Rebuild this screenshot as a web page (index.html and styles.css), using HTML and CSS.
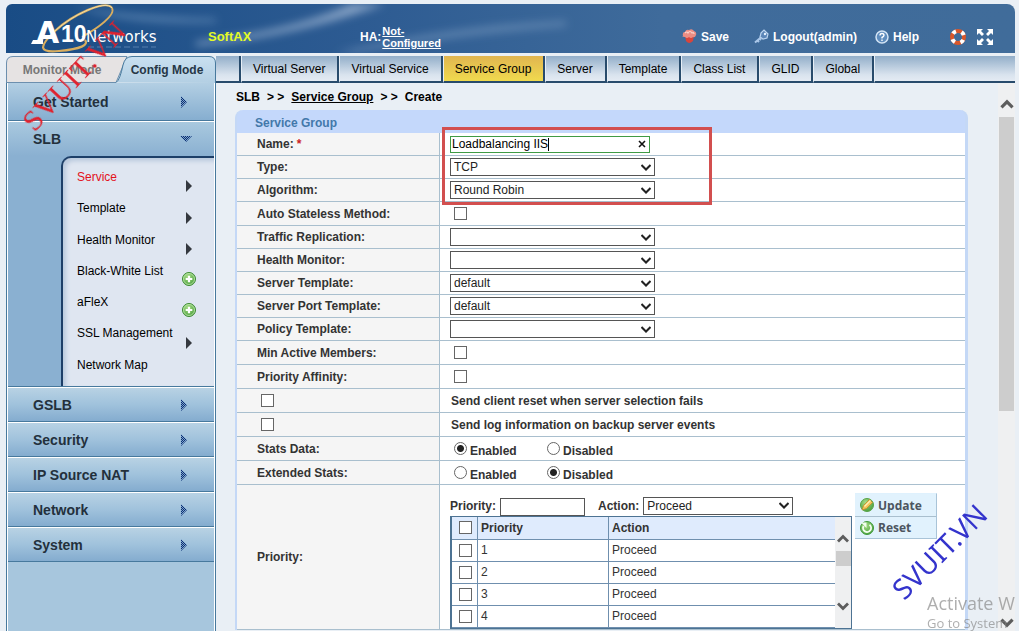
FILE: index.html
```html
<!DOCTYPE html>
<html lang="en">
<head>
<meta charset="utf-8">
<title>SLB - Service Group - Create</title>
<link rel="stylesheet" href="styles.css">
</head>
<body>
<svg class="defs" aria-hidden="true">
  <defs>
    <pattern id="dots" width="2" height="2" patternUnits="userSpaceOnUse"><path d="M0 0h1v1H0zM1 1h1v1H1z" fill="#0a2f72"/></pattern>
    <radialGradient id="green" cx=".4" cy=".3" r=".8"><stop offset="0" stop-color="#a5dc86"/><stop offset="1" stop-color="#429a35"/></radialGradient>
    <symbol id="right" viewBox="0 0 8 12"><path d="M1 0 7 6 1 12z" fill="#7fa3cb"/><path d="M1 0 7 6 1 12z" fill="url(#dots)"/></symbol>
    <symbol id="down" viewBox="0 0 12 8"><path d="M0 1h12L6 7z" fill="#7fa3cb"/><path d="M0 1h12L6 7z" fill="url(#dots)"/></symbol>
    <symbol id="sub" viewBox="0 0 6 12"><path d="M0 0 6 6 0 12z" fill="#34383f"/></symbol>
    <symbol id="plus" viewBox="0 0 14 14"><circle cx="7" cy="7" r="6.5" fill="url(#green)" stroke="#3c8a32"/><circle cx="7" cy="7" r="5.5" fill="none" stroke="#c3e8b0" stroke-width=".8"/><path d="M7 3.7v6.6M3.700 7h6.600" stroke="#fff" stroke-width="2.200"/></symbol>
    <symbol id="up-chev" viewBox="0 0 12 9"><path d="M1 7.500 6 2.500 11 7.500" fill="none" stroke="#5d5d5d" stroke-width="2.800"/></symbol>
    <symbol id="down-chev" viewBox="0 0 12 9"><path d="M1 1.500 6 6.500 11 1.500" fill="none" stroke="#5d5d5d" stroke-width="2.800"/></symbol>
  </defs>
</svg>

<header class="banner">
  <svg class="streaks" viewBox="0 0 1009 49" preserveAspectRatio="none" aria-hidden="true">
    <defs><filter id="soft"><feGaussianBlur stdDeviation="4"/></filter></defs>
    <g filter="url(#soft)">
      <path d="M190 38Q290 26 345 0h34Q290 32 190 42z" fill="#a3b9d6" opacity=".75"/>
      <path d="M70 2Q110 12 210 15v3Q110 20 70 2z" fill="#8eb0d4" opacity=".55"/>
      <path d="M330 49Q440 22 560 17v5Q440 32 350 49z" fill="#8dabcd" opacity=".45"/>
    </g>
  </svg>
  <svg class="logo" viewBox="0 0 140 49" role="img" aria-label="A10 Networks">
    <path d="M106 4c-6-9-40 7-57 23-17 16-16 22 4 20 22-2 30-6 26-11" fill="none" stroke="#d9ae5f" stroke-width="2.200"/>
    <path d="M106 4c-6-9-40 7-57 23" fill="none" stroke="#f1dca6" stroke-width="1"/>
    <path d="M106 4c4 7-14 20-30 29" fill="none" stroke="#d9ae5f" stroke-width="1.800"/>
    <g fill="#fff">
      <path d="M27 36h10v4H25z"/>
      <text x="30" y="39" class="logo-a">A</text>
      <text x="55" y="38" class="logo-ten">10</text>
      <text x="80" y="38" class="logo-net">Networks</text>
    </g>
    <path d="M82 43h68" stroke="#6d93c0" stroke-width="2" stroke-dasharray="6 3" opacity=".35"/>
  </svg>
  <strong class="product">SoftAX</strong>
  <div class="ha"><span>HA:</span><a href="#">Not-<br>Configured</a></div>
  <nav class="tools">
    <a href="#" class="tool"><svg width="15" height="15" viewBox="0 0 15 15" aria-hidden="true"><path d="M3 6h9l-1 6q-4 4-7 0z" fill="#d8453c"/><path d="M1 7Q0 3 3 3q1-3 4-2 3-2 5 1 3 1 2 4-1 3-3 2-2 2-4 0-2 2-4 0-2 0-3-1z" fill="#ec8d83"/><path d="M3 4q2-2 3 0 2-3 4 0 2-1 2 1" fill="none" stroke="#fbd3cb" stroke-width="1.200"/></svg>Save</a>
    <a href="#" class="tool"><svg width="15" height="15" viewBox="0 0 15 15" aria-hidden="true"><path d="M1 13.500 8 7.500M3 11l2 2M5 9l2 2" stroke="#a9c6e8" stroke-width="2"/><path d="M7 4l3-3 4 4-1 4-4 1-3-2z" fill="#5c86b8" stroke="#bcd4ef" stroke-width="1.200"/><circle cx="11" cy="5" r="1.200" fill="#e4f0fc"/></svg>Logout(admin)</a>
    <a href="#" class="tool"><svg width="14" height="14" viewBox="0 0 14 14" aria-hidden="true"><circle cx="7" cy="7" r="6" fill="#5f8dbe" stroke="#d3e4f5" stroke-width="1.500"/><path d="M5 5.500Q5 3.500 7 3.500t2 1.800Q9 6.500 7 7.500v1M7 9.500V11" fill="none" stroke="#fff" stroke-width="1.400"/></svg>Help</a>
    <a href="#" class="tool" aria-label="Support"><svg width="18" height="18" viewBox="0 0 18 18" aria-hidden="true"><circle cx="9" cy="9" r="6" fill="none" stroke="#d9572b" stroke-width="4"/><circle cx="9" cy="9" r="6" fill="none" stroke="#fff" stroke-width="4" stroke-dasharray="3.600 5.825" stroke-dashoffset="-3"/></svg></a>
    <a href="#" class="tool" aria-label="Full screen"><svg width="16" height="16" viewBox="0 0 16 16" aria-hidden="true"><path d="M0 0h6L4 2l3 3-2 2-3-3-2 2zM16 0v6l-2-2-3 3-2-2 3-3-2-2zM0 16v-6l2 2 3-3 2 2-3 3 2 2zM16 16h-6l2-2-3-3 2-2 3 3 2-2z" fill="#fff"/></svg></a>
  </nav>
</header>

<div class="body">
  <aside class="side">
    <div class="modes">
      <svg class="modes-bg" viewBox="0 0 210 27" preserveAspectRatio="none" aria-hidden="true">
        <defs><linearGradient id="tab" x2="0" y2="1"><stop offset="0" stop-color="#c9e0f0"/><stop offset="1" stop-color="#b3cfe3"/></linearGradient></defs>
        <path d="M.5 27V7Q.5.500 7 .500h114L110 26.500H1" fill="#e6e3e3" stroke="#6c8fae"/>
        <path d="M110 26.500Q114 24 117 9q2-8.500 9-8.500h77q6.500 0 6.500 6.500v20" fill="url(#tab)" stroke="#47799d"/>
      </svg>
      <a href="#" class="mode off">Monitor Mode</a>
      <a href="#" class="mode">Config Mode</a>
    </div>
    <nav class="menu">
      <a href="#" class="item">Get Started<svg width="8" height="12"><use href="#right"/></svg></a>
      <div class="group">
        <a href="#" class="item open">SLB<svg width="12" height="8"><use href="#down"/></svg></a>
        <ul class="submenu">
          <li><a href="#" class="current">Service</a><svg width="6" height="12"><use href="#sub"/></svg></li>
          <li><a href="#">Template</a><svg width="6" height="12"><use href="#sub"/></svg></li>
          <li><a href="#">Health Monitor</a><svg width="6" height="12"><use href="#sub"/></svg></li>
          <li><a href="#">Black-White List</a><svg width="14" height="14"><use href="#plus"/></svg></li>
          <li><a href="#">aFleX</a><svg width="14" height="14"><use href="#plus"/></svg></li>
          <li><a href="#">SSL Management</a><svg width="6" height="12"><use href="#sub"/></svg></li>
          <li><a href="#">Network Map</a></li>
        </ul>
      </div>
      <a href="#" class="item">GSLB<svg width="8" height="12"><use href="#right"/></svg></a>
      <a href="#" class="item">Security<svg width="8" height="12"><use href="#right"/></svg></a>
      <a href="#" class="item">IP Source NAT<svg width="8" height="12"><use href="#right"/></svg></a>
      <a href="#" class="item">Network<svg width="8" height="12"><use href="#right"/></svg></a>
      <a href="#" class="item">System<svg width="8" height="12"><use href="#right"/></svg></a>
    </nav>
  </aside>

  <div class="main">
    <nav class="tabs">
      <span class="tab lead"></span>
      <a href="#" class="tab">Virtual Server</a>
      <a href="#" class="tab">Virtual Service</a>
      <a href="#" class="tab active">Service Group</a>
      <a href="#" class="tab">Server</a>
      <a href="#" class="tab">Template</a>
      <a href="#" class="tab">Class List</a>
      <a href="#" class="tab">GLID</a>
      <a href="#" class="tab">Global</a>
      <span class="tab rest"></span>
    </nav>
    <div class="view">
      <main class="content">
        <div class="crumbs"><span>SLB</span><span>&gt; &gt;</span><a href="#">Service Group</a><span>&gt; &gt;</span><span>Create</span></div>
        <form class="panel">
          <h2>Service Group</h2>
          <div class="row"><label class="name" for="name">Name: <em>*</em></label><div class="value"><span class="clearable"><input type="text" id="name" value="Loadbalancing IIS"><i class="caret"></i><button type="button" aria-label="Clear"><svg width="8" height="8" viewBox="0 0 8 8"><path d="M1 1l6 6M7 1 1 7" stroke="#111" stroke-width="1.600"/></svg></button></span></div></div>
          <div class="row"><label class="name" for="type">Type:</label><div class="value"><select id="type"><option>TCP</option></select></div></div>
          <div class="row"><label class="name" for="algo">Algorithm:</label><div class="value"><select id="algo"><option>Round Robin</option></select></div></div>
          <div class="row tall"><label class="name" for="auto">Auto Stateless Method:</label><div class="value"><input type="checkbox" id="auto"></div></div>
          <div class="row"><label class="name" for="traffic">Traffic Replication:</label><div class="value"><select id="traffic"><option></option></select></div></div>
          <div class="row"><label class="name" for="health">Health Monitor:</label><div class="value"><select id="health"><option></option></select></div></div>
          <div class="row"><label class="name" for="stpl">Server Template:</label><div class="value"><select id="stpl"><option>default</option></select></div></div>
          <div class="row"><label class="name" for="sptpl">Server Port Template:</label><div class="value"><select id="sptpl"><option>default</option></select></div></div>
          <div class="row"><label class="name" for="ptpl">Policy Template:</label><div class="value"><select id="ptpl"><option></option></select></div></div>
          <div class="row tall"><label class="name" for="min">Min Active Members:</label><div class="value"><input type="checkbox" id="min"></div></div>
          <div class="row tall"><label class="name" for="aff">Priority Affinity:</label><div class="value"><input type="checkbox" id="aff"></div></div>
          <div class="row tall"><div class="name"><input type="checkbox" id="rst"></div><label class="value" for="rst">Send client reset when server selection fails</label></div>
          <div class="row tall"><div class="name"><input type="checkbox" id="log"></div><label class="value" for="log">Send log information on backup server events</label></div>
          <div class="row tall"><span class="name">Stats Data:</span><div class="value radios"><label><input type="radio" name="stats" checked><span>Enabled</span></label><label><input type="radio" name="stats"><span>Disabled</span></label></div></div>
          <div class="row tall"><span class="name">Extended Stats:</span><div class="value radios"><label><input type="radio" name="ext"><span>Enabled</span></label><label><input type="radio" name="ext" checked><span>Disabled</span></label></div></div>
          <div class="row last">
            <span class="name">Priority:</span>
            <div class="value prio">
              <div class="list">
                <div class="entry"><label for="prio">Priority:</label><input type="text" id="prio"><label for="action" class="action">Action:</label><select id="action"><option>Proceed</option></select></div>
                <div class="grid">
                  <table>
                    <thead><tr><th class="tick"><input type="checkbox" aria-label="Select all"></th><th class="num">Priority</th><th>Action</th></tr></thead>
                    <tbody>
                      <tr><td class="tick"><input type="checkbox" aria-label="Select 1"></td><td>1</td><td>Proceed</td></tr>
                      <tr><td class="tick"><input type="checkbox" aria-label="Select 2"></td><td>2</td><td>Proceed</td></tr>
                      <tr><td class="tick"><input type="checkbox" aria-label="Select 3"></td><td>3</td><td>Proceed</td></tr>
                      <tr><td class="tick"><input type="checkbox" aria-label="Select 4"></td><td>4</td><td>Proceed</td></tr>
                    </tbody>
                  </table>
                  <div class="bar small"><svg width="12" height="9"><use href="#up-chev"/></svg><i class="thumb"></i><svg width="12" height="9"><use href="#down-chev"/></svg></div>
                </div>
              </div>
              <div class="actions">
                <button type="button"><svg width="14" height="14" viewBox="0 0 14 14" aria-hidden="true"><circle cx="7" cy="7" r="6.500" fill="url(#green)" stroke="#58a348"/><path d="M2 12 3.500 7.500 9.500 1.500 12.500 4.500 6.500 10.500z" fill="#f3c75a" stroke="#c48a28" stroke-width=".8"/><path d="M4.500 8.500 10.500 2.500" stroke="#fff0b8" stroke-width="1.200"/></svg>Update</button>
                <button type="button"><svg width="14" height="14" viewBox="0 0 14 14" aria-hidden="true"><circle cx="7" cy="7" r="6.500" fill="url(#green)" stroke="#3f9a3c"/><path d="M9.500 3.800A4 4 0 1 1 3.600 5" fill="none" stroke="#f2fff0" stroke-width="1.900"/><path d="M1 1.500h5.500V7z" fill="#f2fff0"/></svg>Reset</button>
              </div>
            </div>
          </div>
          <div class="highlight" aria-hidden="true"></div>
        </form>
      </main>
      <div class="bar"><svg width="14" height="10"><use href="#up-chev"/></svg><i class="thumb"></i><svg width="14" height="10"><use href="#down-chev"/></svg></div>
    </div>
  </div>
</div>

<div class="activate"><span>Activate W</span><small>Go to System</small></div>
<div class="mark red">SVUIT.VN</div>
<div class="mark blue">SVUIT.VN</div>
</body>
</html>
```
FILE: styles.css
```css
* { box-sizing: border-box; }

body {
  margin: 0;
  height: 100vh;
  overflow: hidden;
  display: flex;
  flex-direction: column;
  gap: 3px;
  padding: 4px 4px 0 6px;
  background: #e9eff5;
  color: #333;
  font: 12px/16px "Liberation Sans", Arial, sans-serif;
}

a { color: inherit; text-decoration: none; }
svg { display: block; flex: none; }
.defs { position: absolute; width: 0; height: 0; }

/* Banner */
.banner {
  position: relative;
  flex: none;
  display: flex;
  align-items: center;
  height: 49px;
  padding: 0 22px 0 0;
  border-radius: 6px 8px 0 0;
  overflow: hidden;
  background: linear-gradient(90deg, #194c85, #2d5b92 35%, #3f6b9b 65%, #406c9a);
  color: #fff;
  font-weight: bold;
}
.streaks { position: absolute; inset: 0; width: 100%; height: 100%; }
.logo { position: relative; width: 140px; height: 49px; overflow: visible; }
.logo-a { font: bold 30px "DejaVu Sans", sans-serif; }
.logo-ten { font: bold 23px "Liberation Sans", sans-serif; }
.logo-net { font: 15px "DejaVu Sans", sans-serif; }
.product { position: relative; margin-left: 62px; width: 152px; padding-top: 16px; color: #e4fb25; font-size: 13px; }
.ha { position: relative; display: flex; align-items: center; gap: 1px; padding-top: 16px; }
.ha a { font-size: 11px; line-height: 12px; text-decoration: underline; }
.tools { position: relative; display: flex; align-items: center; gap: 10px; margin-left: auto; padding-top: 16px; }
.tool { display: flex; align-items: center; gap: 4px; }
.tool:nth-child(2) { margin-left: 15px; }
.tool:nth-child(3) { margin-left: 8px; }
.tool:nth-child(4) { margin-left: 20px; }

.body { flex: 1; display: flex; min-height: 0; }

/* Sidebar */
.side { flex: none; display: flex; flex-direction: column; width: 210px; }
.modes { position: relative; display: flex; height: 27px; line-height: 29px; font-weight: bold; }
.modes-bg { position: absolute; width: 100%; height: 100%; }
.mode { position: relative; width: 98px; text-align: center; color: #263746; }
.mode.off { width: 112px; color: #777; }
.menu {
  flex: 1;
  border: solid #47799d;
  border-width: 0 1px;
  box-shadow: inset 1px 0 #fff, inset -1px 0 #fff;
  padding: 0 1px;
  background: #a7c6dd;
}
.item {
  display: flex;
  align-items: center;
  justify-content: space-between;
  height: 35px;
  padding: 0 26px 0 25px;
  border-top: 1px solid #fff;
  border-bottom: 1px solid #47799d;
  background: linear-gradient(#b8d2e4, #a0c2dc 50%, #84accf);
  color: #23303c;
  font-size: 14px;
  font-weight: bold;
}
.item:first-child { height: 38px; border-top: 0; background: linear-gradient(#b3cfe3, #86aed0); }
.group .item.open { height: 35px; border-top: 1px solid #fff; border-bottom: 0; padding-right: 22px; background: linear-gradient(#a9c9df, #8ab0d1); }
.group { background: #8ab0d1; border-bottom: 1px solid #47799d; }
.submenu {
  display: grid;
  grid-auto-rows: 1fr;
  height: 230px;
  margin: 0 0 0 53px;
  padding: 9px 18px 0 14px;
  list-style: none;
  border: solid #1d3f68;
  border-width: 2px 0 0 2px;
  border-radius: 10px 0 0;
  background: #dfe6f1;
  box-shadow: inset 3px 3px 4px #b9c9dd;
  color: #000;
}
.submenu li { display: grid; grid-template-columns: 1fr 14px; justify-items: center; align-items: start; }
.submenu a { justify-self: start; padding-top: 2px; white-space: nowrap; }
.submenu svg { align-self: end; margin-bottom: 6px; }
.submenu .current { color: #e3121c; }

/* Top navigation */
.main { flex: 1; display: flex; flex-direction: column; min-width: 0; }
.tabs { flex: none; display: flex; height: 27px; }
.tab {
  padding: 0 12px 0 11px;
  border-left: 1px solid #e6eef6;
  border-right: 2px solid #284b6c;
  border-bottom: 2px solid #284b6c;
  background: linear-gradient(#92aec9, #d9e3ee 75%, #e4ebf3);
  color: #000;
  line-height: 26px;
  white-space: nowrap;
}
.tab.lead { width: 25px; padding: 0; border-left: 0; }
.tab.rest { flex: 1; border-right: 0; }
.tab.active { background: linear-gradient(#e0b550, #f0da4e); }

.view { flex: 1; display: flex; min-height: 0; }
.content { flex: 1; min-width: 0; padding: 6px 30px 0 19px; }
.crumbs { display: flex; gap: 7px; height: 21px; padding-left: 1px; color: #000; font-weight: bold; }
.crumbs a { text-decoration: underline; }

/* Form panel */
.panel { position: relative; border: solid #c4d8f6; border-width: 0 3px 0 2px; border-radius: 8px 8px 0 0; background: #c4d8fb; }
.panel h2 { margin: 0; height: 23px; padding-left: 18px; color: #4378aa; font-size: 12px; line-height: 27px; }
.row { display: flex; height: 23px; border-bottom: 1px solid #a9bfce; background: #fff; font-weight: bold; }
.row.tall { height: 24px; }
.row.last { height: 145px; }
.name { flex: none; display: flex; align-items: center; gap: 3px; width: 203px; padding-left: 20px; border-right: 1px solid #a9bfce; background: #f5f5f5; }
.name em { color: #c22; font-style: normal; }
.value { flex: 1; display: flex; align-items: center; padding-left: 10px; }
.name input { margin-left: 4px; }
div.value > input[type="checkbox"] { margin-left: 4px; }
label.value { padding-left: 11px; }

input, select, button { margin: 0; font: inherit; color: #222; border-radius: 0; }
input[type="text"], select { height: 18px; border: 1px solid #555; background: #fff; font-weight: normal; outline: 0; }
select {
  appearance: none;
  width: 205px;
  padding: 0 20px 0 3px;
  background: #fff url("data:image/svg+xml,%3Csvg xmlns='http://www.w3.org/2000/svg' width='10' height='7'%3E%3Cpath d='M.5 1 5 5.500 9.500 1' fill='none' stroke='%23222' stroke-width='2'/%3E%3C/svg%3E") right 3px center no-repeat;
}
input[type="checkbox"], input[type="radio"] { appearance: none; flex: none; width: 13px; height: 13px; border: 1px solid #666; background: #fff; }
input[type="radio"] { border-radius: 50%; }
input[type="radio"]:checked { background: radial-gradient(circle, #222 3px, #fff 4px); }
.radios label { display: flex; align-items: center; gap: 3px; width: 93px; padding-left: 4px; }
.radios span { padding-top: 4px; }

.clearable { position: relative; display: flex; width: 200px; }
.clearable input { width: 100%; padding: 0 20px 0 1px; height: 17px; border-color: #3f9b45; color: #000; }
.clearable button { position: absolute; right: 4px; top: 4px; padding: 0; border: 0; background: none; }
.caret { position: absolute; left: 98px; top: 2px; width: 1px; height: 13px; background: #000; }
.highlight { position: absolute; left: 205px; top: 17px; width: 270px; height: 78px; border: 3px solid #d24f4f; pointer-events: none; }

/* Priority list */
.prio { align-items: flex-start; gap: 3px; padding-top: 8px; }
.list { width: 402px; padding-top: 2px; }
.entry { display: flex; align-items: center; gap: 4px; height: 21px; }
.entry input { width: 85px; margin-top: 2px; }
.entry select { width: 150px; }
.entry .action { margin-left: 9px; }
.grid { display: flex; border: 1px solid #4d7393; border-left-width: 2px; }
table { flex: 1; border-collapse: collapse; font-weight: normal; }
th, td { height: 22px; padding: 0 3px; border: solid #6f8fae; border-width: 0 0 1px 1px; text-align: left; }
th { background: #dfebfd; }
.tick { width: 25px; padding: 0 5px 0 7px; border-left: 0; }
.tick input { display: block; }
.num { width: 131px; }

.actions { border: 1px solid #a9c4d8; border-left: 0; border-top-color: #dff1fd; }
.actions button { display: flex; align-items: center; gap: 4px; width: 81px; height: 22px; padding: 0 5px; border: 0; background: #e1f2fd; color: #4c5560; font: bold 12px "Open Sans", sans-serif; }
.actions button + button { border-top: 1px solid #a9bfce; }

/* Scroll bars */
.bar { flex: none; display: flex; flex-direction: column; align-items: center; width: 17px; padding: 16px 0 3px; background: #eff0f1; }
.bar .thumb { width: 15px; height: 294px; margin: 8px 0 auto; background: #cdcdcd; }
.bar.small { width: 16px; padding: 17px 0; }
.bar.small .thumb { height: 15px; margin: 8px 0 auto; }

/* Overlays */
.activate { position: fixed; left: 927px; top: 592px; display: flex; flex-direction: column; color: rgba(130, 130, 130, .65); font-family: "Open Sans", sans-serif; white-space: nowrap; }
.activate span { font-size: 18px; line-height: 23px; }
.activate small { font-size: 13px; line-height: 16px; }
.mark { position: fixed; white-space: nowrap; line-height: 32px; width: 140px; text-align: center; }
.mark.red { left: 4px; top: 60px; color: #e0202c; font-family: "Liberation Serif", serif; font-size: 30px; transform: rotate(-47deg); }
.mark.blue { left: 869px; top: 535px; color: #3434cc; font-family: "Noto Sans", sans-serif; font-size: 28px; transform: rotate(-45deg); }
```
